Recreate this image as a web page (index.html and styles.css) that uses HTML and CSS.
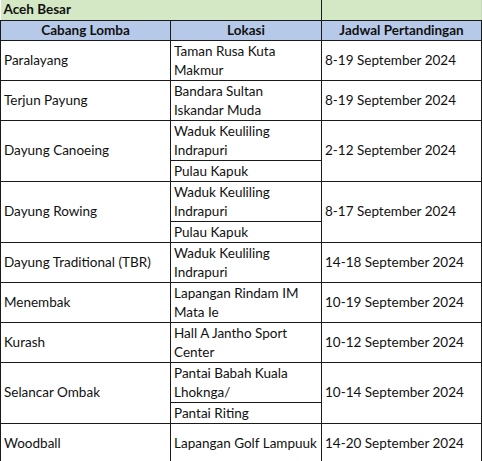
FILE: index.html
```html
<!DOCTYPE html>
<html>
<head>
<meta charset="utf-8">
<link rel="stylesheet" href="styles.css">
</head>
<body>
<table class="sheet">
  <colgroup>
    <col class="c1"><col class="c2"><col class="c3">
  </colgroup>
  <tr class="title">
    <td colspan="2" class="title-cell">Aceh Besar</td>
    <td class="title-end"></td>
  </tr>
  <tr class="head">
    <th>Cabang Lomba</th>
    <th>Lokasi</th>
    <th>Jadwal Pertandingan</th>
  </tr>
  <tr class="r2">
    <td>Paralayang</td>
    <td class="loc">Taman Rusa Kuta<br>Makmur</td>
    <td>8-19 September 2024</td>
  </tr>
  <tr class="r2">
    <td>Terjun Payung</td>
    <td class="loc">Bandara Sultan<br>Iskandar Muda</td>
    <td>8-19 September 2024</td>
  </tr>
  <tr class="r2">
    <td rowspan="2">Dayung Canoeing</td>
    <td class="loc">Waduk Keuliling<br>Indrapuri</td>
    <td rowspan="2">2-12 September 2024</td>
  </tr>
  <tr class="r1">
    <td class="loc">Pulau Kapuk</td>
  </tr>
  <tr class="r2">
    <td rowspan="2">Dayung Rowing</td>
    <td class="loc">Waduk Keuliling<br>Indrapuri</td>
    <td rowspan="2">8-17 September 2024</td>
  </tr>
  <tr class="r1">
    <td class="loc">Pulau Kapuk</td>
  </tr>
  <tr class="r2">
    <td>Dayung Traditional (TBR)</td>
    <td class="loc">Waduk Keuliling<br>Indrapuri</td>
    <td>14-18 September 2024</td>
  </tr>
  <tr class="r2">
    <td>Menembak</td>
    <td class="loc">Lapangan Rindam IM<br>Mata Ie</td>
    <td>10-19 September 2024</td>
  </tr>
  <tr class="r2">
    <td>Kurash</td>
    <td class="loc">Hall A Jantho Sport<br>Center</td>
    <td>10-12 September 2024</td>
  </tr>
  <tr class="r2">
    <td rowspan="2">Selancar Ombak</td>
    <td class="loc">Pantai Babah Kuala<br>Lhoknga/</td>
    <td rowspan="2">10-14 September 2024</td>
  </tr>
  <tr class="r1">
    <td class="loc">Pantai Riting</td>
  </tr>
  <tr class="r2">
    <td>Woodball</td>
    <td class="loc mid">Lapangan Golf Lampuuk</td>
    <td>14-20 September 2024</td>
  </tr>
</table>
</body>
</html>
```

FILE: styles.css
```css
html, body {
  margin: 0;
  padding: 0;
  background: #ffffff;
}

.sheet {
  border-collapse: collapse;
  table-layout: fixed;
  width: 481px;
  font-family: "Lato", "Liberation Sans", sans-serif;
  font-size: 13.5px;
  color: #111;
}

.c1 { width: 170px; }
.c2 { width: 151px; }
.c3 { width: 160px; }

.sheet td,
.sheet th {
  border: 1px solid #1a1a1a;
  padding: 0 3px;
  line-height: 19px;
  vertical-align: middle;
  white-space: nowrap;
  overflow: hidden;
  text-align: left;
  box-sizing: border-box;
}

.title td {
  background: #d4e8c5;
  height: 20px;
  font-weight: bold;
  border-top: none;
  border-left: none;
}

.title .title-cell {
  border-right: 1px solid #1a1a1a;
}

.title .title-end {
  border-right: 1px solid #c9d9bd;
}

.head th {
  background: #b7c9e8;
  height: 20px;
  font-weight: bold;
  text-align: center;
}

.r2 td { height: 40px; }
.r1 td { height: 20px; }

.sheet .loc {
  vertical-align: top;
  padding-top: 1px;
}

.sheet .loc.mid {
  vertical-align: middle;
  padding-top: 0;
}
```
